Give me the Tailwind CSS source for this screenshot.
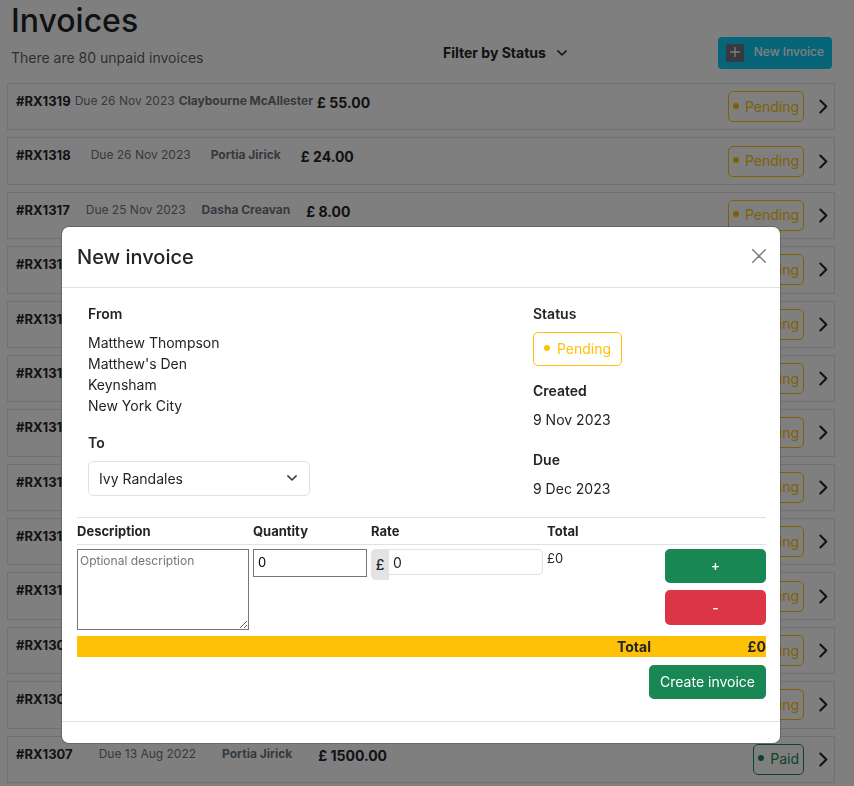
<!DOCTYPE html>
<html lang="en">
<head>
<meta charset="utf-8">
<meta name="viewport" content="width=device-width, initial-scale=1">
<title>Invoices</title>
<script src="https://cdn.jsdelivr.net/npm/@tailwindcss/browser@4"></script>
</head>
<body class="bg-white font-[Inter,'Liberation_Sans',sans-serif] text-sm text-[#212529]">

<svg class="hidden" aria-hidden="true">
  <symbol id="chevron" viewBox="0 0 16 16"><path d="M4.6 1.6 11 8l-6.4 6.4" fill="none" stroke="currentColor" stroke-width="2.2" stroke-linecap="round" stroke-linejoin="round"/></symbol>
  <symbol id="down" viewBox="0 0 16 16"><path d="m2.5 5.2 5.5 5.5 5.5-5.5" fill="none" stroke="currentColor" stroke-width="2" stroke-linecap="round" stroke-linejoin="round"/></symbol>
</svg>

<main class="flex min-h-screen flex-col pt-1 pr-[19px] pb-[3px] pl-[7px]">
  <header class="flex h-[79px] shrink-0 items-start">
    <div class="w-[436px] pl-1">
      <h1 class="text-[32px] leading-[34px] font-medium">Invoices</h1>
      <p class="mt-[9px] leading-[22px] text-[#212529]/75">There are 80 unpaid invoices</p>
    </div>
    <button type="button" class="mt-[38px] flex items-center gap-[10px] font-bold leading-[22px]">Filter by Status
      <svg class="size-3"><use href="#down"/></svg>
    </button>
    <button type="button" class="mt-[33px] mr-[3px] ml-auto flex h-8 items-center gap-[10px] rounded-[4px] bg-[#0dcaf0] px-2 text-xs font-medium text-white">
      <span class="flex size-[18px] items-center justify-center rounded-[2px] bg-[#6c757d]">
        <svg class="mb-[2px] size-[10px]" viewBox="0 0 10 10"><path d="M5 0v10M0 5h10" stroke="currentColor" stroke-width="1.3"/></svg>
      </span>
      <span class="mb-[2px]">New Invoice</span>
    </button>
  </header>

  <ul id="invoices" class="grid flex-1 auto-rows-fr gap-[7px]"></ul>
</main>

<template id="row">
  <li class="flex border border-[#dee2e6] pl-2">
    <div data-info class="flex pt-2 leading-[18px]">
      <span data-id class="text-[13px] font-bold leading-[18px]"></span>
      <span data-due class="text-xs leading-[18px] text-[#6c757d]"></span>
      <span data-name class="text-xs font-bold leading-[18px] text-[#6c757d]"></span>
      <span data-amount class="font-bold leading-[22px]"></span>
    </div>
    <div class="ml-auto flex items-center gap-3 pr-[3px]">
      <span data-badge class="flex h-[31px] items-center rounded-[5px] border px-1"><span class="mr-[6px] mb-[2px] size-[6px] rounded-full bg-current"></span><span data-status></span></span>
      <a href="#" aria-label="Open invoice"><svg class="size-[15px]"><use href="#chevron"/></svg></a>
    </div>
  </li>
</template>

<div class="fixed inset-0 flex items-start justify-center overflow-hidden bg-black/50 pt-[227px] pr-[74px] pl-[62px]">
  <form role="dialog" aria-labelledby="dialog-title" class="w-full max-w-[718px] rounded-[7px] bg-white shadow-[0_0_0_1px_rgba(0,0,0,0.18)]">
    <div class="flex h-[61px] items-center justify-between border-b border-[#dee2e6] pr-[14px] pl-[15px]">
      <h2 id="dialog-title" class="text-xl font-medium">New invoice</h2>
      <button type="button" aria-label="Close" class="mb-[2px] text-black/50"><svg class="size-[14px]" viewBox="0 0 14 14"><path d="m.7.7 12.6 12.6M13.3.7.7 13.3" stroke="currentColor" stroke-width="1.5" stroke-linecap="round"/></svg></button>
    </div>

    <div class="border-b border-[#dee2e6] pt-[15px] pr-[14px] pb-[22px] pl-[15px]">
      <div class="flex px-[11px] leading-[22px]">
        <div class="w-[445px]">
          <h3 class="mb-[7px] font-semibold">From</h3>
          <address class="not-italic leading-[21px]">Matthew Thompson<br>Matthew's Den<br>Keynsham<br>New York City</address>
          <label for="client" class="mt-4 mb-[7px] block font-semibold">To</label>
          <div class="relative w-[222px]">
            <select id="client" class="h-[35px] w-full appearance-none rounded-[5px] border border-[#dee2e6] bg-white px-[10px]"><option>Ivy Randales</option></select>
            <svg class="pointer-events-none absolute top-[11px] right-3 size-3 text-[#343a40]"><use href="#down"/></svg>
          </div>
        </div>
        <dl>
          <dt class="mb-[7px] font-semibold">Status</dt>
          <dd class="mb-[14px] flex h-[34px] w-[89px] items-center rounded-[5px] border border-[#ffc107] px-[10px] text-[#ffc107]"><span class="mr-[7px] mb-[2px] size-[6px] rounded-full bg-current"></span>Pending</dd>
          <dt class="mb-[7px] font-semibold">Created</dt>
          <dd class="mb-[18px]">9 Nov 2023</dd>
          <dt class="mb-[7px] font-semibold">Due</dt>
          <dd>9 Dec 2023</dd>
        </dl>
      </div>

      <table class="mt-[17px] w-full table-fixed text-left text-xs">
        <colgroup><col class="w-[176px]"><col class="w-[118px]"><col class="w-[176px]"><col class="w-[118px]"><col></colgroup>
        <thead>
          <tr class="h-[27px] border-y border-[#dee2e6] align-middle text-[13px] leading-[18px]">
            <th>Description</th><th>Quantity</th><th>Rate</th><th>Total</th><td></td>
          </tr>
        </thead>
        <tbody>
          <tr class="align-top">
            <td class="pt-1 pr-1"><textarea aria-label="Description" placeholder="Optional description" class="block h-[81px] w-full border border-[#767676] px-[2px] py-[3px] placeholder:text-[#757575]"></textarea></td>
            <td class="pt-1 pr-1"><input aria-label="Quantity" type="text" value="0" class="block h-7 w-full border border-[#767676] px-1 pb-[2px] text-[13px] text-black"></td>
            <td class="pt-1 pr-1">
              <div class="flex items-start text-sm">
                <label for="rate" class="flex h-[31px] w-[18px] items-center justify-center rounded-l-[5px] bg-[#e2e3e5] font-medium">£</label>
                <input id="rate" type="text" value="0" class="h-[26px] min-w-0 flex-1 rounded-r-[5px] border border-l-0 border-[#dee2e6] px-1">
              </div>
            </td>
            <td class="pt-1 text-[13px] leading-[18px]">£0</td>
            <td class="pt-1">
              <button type="button" class="mb-[7px] block h-[34px] w-full rounded-[5px] bg-[#198754] text-sm font-medium text-white">+</button>
              <button type="button" class="block h-[35px] w-full rounded-[5px] bg-[#dc3545] text-sm font-medium text-white">-</button>
            </td>
          </tr>
        </tbody>
      </table>

      <div class="mt-[6px] flex h-[21px] items-center justify-end bg-[#ffc107] font-bold">
        <span>Total</span><output class="w-[115px] text-right">£0</output>
      </div>
      <button type="submit" class="mt-2 ml-auto block h-[34px] rounded-[5px] bg-[#198754] px-[11px] text-white">Create invoice</button>
    </div>
    <div class="h-[21px]"></div>
  </form>
</div>

<script>
  const invoices = [
    ["#RX1319", "26 Nov 2023", "Claybourne McAllester", "55.00", "gap-1"],
    ["#RX1318", "26 Nov 2023", "Portia Jirick", "24.00", "gap-5"],
    ["#RX1317", "25 Nov 2023", "Dasha Creavan", "8.00", "gap-4"],
    ["#RX1316"], ["#RX1315"], ["#RX1314"], ["#RX1313"], ["#RX1312"],
    ["#RX1311"], ["#RX1310"], ["#RX1309"], ["#RX1308"],
    ["#RX1307", "13 Aug 2022", "Portia Jirick", "1500.00", "gap-[26px]", "Paid"],
  ];
  const list = document.getElementById("invoices");
  const template = document.getElementById("row");
  for (const [id, due, name, amount, gap, status = "Pending"] of invoices) {
    const row = template.content.cloneNode(true);
    const set = (key, text) => { row.querySelector(`[data-${key}]`).textContent = text; };
    set("id", id);
    set("status", status);
    if (due) {
      set("due", "Due " + due);
      set("name", name);
      set("amount", "£ " + amount);
      row.querySelector("[data-info]").classList.add(gap);
    }
    row.querySelector("[data-badge]").classList.add(...(status === "Paid"
      ? ["border-[#198754]", "text-[#198754]"]
      : ["border-[#ffc107]", "text-[#ffc107]"]));
    list.append(row);
  }
</script>
</body>
</html>
